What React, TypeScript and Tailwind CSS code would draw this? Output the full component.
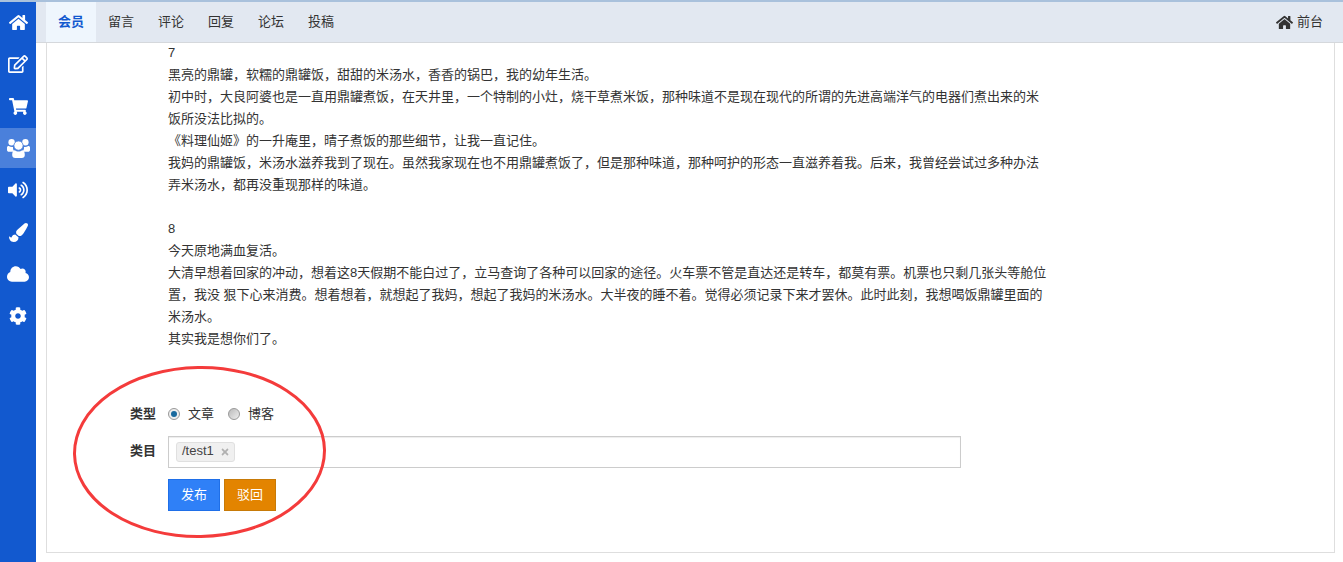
import React from 'react';
import { FaHome, FaRegEdit, FaShoppingCart, FaVolumeUp, FaPaintBrush, FaCloud, FaCog, FaTimes } from 'react-icons/fa';

// FontAwesome 4 style group icon, the package only has the newer shape
const UsersIcon = () => (
  <svg width="23" height="21" viewBox="0 0 23 21" fill="currentColor">
    <circle cx="4.6" cy="4.2" r="3.2" />
    <circle cx="18.4" cy="4.2" r="3.2" />
    <path d="M0 9.6C0 8.6.8 8 1.8 8.1c.9.7 2 1 3.2 1 .3 0 .7 0 1-.1-.2 1.9.5 3.6 1.8 4.8H2c-1.2 0-2-.7-2-1.8V9.6z" />
    <path d="M23 9.6c0-1-.8-1.6-1.8-1.5-.9.7-2 1-3.2 1-.3 0-.7 0-1-.1.2 1.9-.5 3.6-1.8 4.8H21c1.2 0 2-.7 2-1.8V9.6z" />
    <circle cx="11.5" cy="7.6" r="4.6" stroke="#4a80db" strokeWidth="0.8" />
    <path d="M5.2 17c0-2.6.6-4.8 2.6-4.8 1 .9 2.3 1.4 3.7 1.4s2.7-.5 3.7-1.4c2 0 2.6 2.2 2.6 4.8 0 1.9-1.2 3-3 3H8.200c-1.800 0-3-1.100-3-3z" />
  </svg>
);

const sideItems = [
  { icon: <FaHome size={19} /> },
  { icon: <FaRegEdit size={20} /> },
  { icon: <FaShoppingCart size={19} /> },
  { icon: <UsersIcon />, active: true },
  { icon: <FaVolumeUp size={20} /> },
  { icon: <FaPaintBrush size={19} /> },
  { icon: <FaCloud size={22} /> },
  { icon: <FaCog size={18} /> },
];

const tabs = ['会员', '留言', '评论', '回复', '论坛', '投稿'];

const App = () => {
  return (
    <div className="relative h-[562px] overflow-hidden bg-white text-[13px] text-[#333] font-['Liberation_Sans','Noto_Sans_CJK_SC',sans-serif]">
      <div className="h-[2px] bg-[#a9c1dc]" />
      <div className="flex h-[560px]">
        {/* Sidebar */}
        <div className="w-9 shrink-0 bg-[#1259cf]">
          {sideItems.map((item, i) => (
            <div key={i} className={`flex h-10 mb-[2px] items-center justify-center text-white ${item.active ? 'bg-[#4a80db]' : ''}`}>
              {item.icon}
            </div>
          ))}
        </div>

        <div className="flex min-w-0 flex-1 flex-col">
          {/* Top tabs */}
          <div className="flex h-[41px] shrink-0 items-stretch justify-between border-b border-[#d5d8dc] bg-[#e2e8f1] pl-[10px] pr-[10px]">
            <div className="flex">
              {tabs.map((t, i) => (
                <div key={t} className={`flex h-10 w-[50px] items-center justify-center ${i === 0 ? 'bg-[#eff6fd] font-bold text-[#1259cf]' : ''}`}>
                  {t}
                </div>
              ))}
            </div>
            <div className="flex items-center gap-[4px] pr-[10px]">
              <FaHome size={17} />
              <span>前台</span>
            </div>
          </div>

          {/* Panel */}
          <div className="ml-[10px] mr-[8px] mb-[9px] flex-1 border-x border-b border-[#dedede] pl-[121px]">
            <div className="-mt-px w-[880px] leading-[22px]">
              <p>7</p>
              <p>黑亮的鼎罐，软糯的鼎罐饭，甜甜的米汤水，香香的锅巴，我的幼年生活。</p>
              <p>初中时，大良阿婆也是一直用鼎罐煮饭，在天井里，一个特制的小灶，烧干草煮米饭，那种味道不是现在现代的所谓的先进高端洋气的电器们煮出来的米饭所没法比拟的。</p>
              <p>《料理仙姬》的一升庵里，晴子煮饭的那些细节，让我一直记住。</p>
              <p>我妈的鼎罐饭，米汤水滋养我到了现在。虽然我家现在也不用鼎罐煮饭了，但是那种味道，那种呵护的形态一直滋养着我。后来，我曾经尝试过多种办法弄米汤水，都再没重现那样的味道。</p>
              <p className="mt-[22px]">8</p>
              <p>今天原地满血复活。</p>
              <p>大清早想着回家的冲动，想着这8天假期不能白过了，立马查询了各种可以回家的途径。火车票不管是直达还是转车，都莫有票。机票也只剩几张头等舱位置，我没 狠下心来消费。想着想着，就想起了我妈，想起了我妈的米汤水。大半夜的睡不着。觉得必须记录下来才罢休。此时此刻，我想喝饭鼎罐里面的米汤水。</p>
              <p>其实我是想你们了。</p>
            </div>

            {/* Form */}
            <div className="mt-[53px] -ml-[38px]">
              <div className="flex h-[22px] items-center">
                <span className="w-[26px] font-bold">类型</span>
                <div className="ml-3 flex items-center">
                  <span className="flex h-3 w-3 items-center justify-center rounded-full border border-[#999] bg-[#eee]">
                    <span className="h-[6px] w-[6px] rounded-full bg-[#1a6a9e]" />
                  </span>
                  <span className="ml-2">文章</span>
                  <span className="ml-[14px] h-3 w-3 rounded-full border border-[#999] bg-gradient-to-br from-[#bbb] to-[#eee]" />
                  <span className="ml-2">博客</span>
                </div>
              </div>
              <div className="mt-[11px] flex items-center">
                <span className="w-[26px] pb-[2px] font-bold">类目</span>
                <div className="ml-3 flex h-8 w-[793px] items-center border border-[#ccc] pl-[7px] shadow-[inset_0_1px_1px_rgba(0,0,0,0.075)]">
                  <span className="flex h-[20px] w-[59px] items-center gap-[6px] rounded-[3px] border border-[#e0e0e0] bg-[#f0f0f0] pb-[2px] pl-[5px] text-[#444]">
                    /test1
                    <FaTimes size={10} className="mt-[2px] text-[#b0b0b0]" />
                  </span>
                </div>
              </div>
              <div className="ml-[38px] mt-[11px] flex gap-1">
                <button className="h-8 w-[52px] border border-[#1f6fe8] bg-[#2f80f7] text-white">发布</button>
                <button className="h-8 w-[52px] border border-[#c77a08] bg-[#e38400] text-white">驳回</button>
              </div>
            </div>
          </div>
        </div>
      </div>

      {/* Hand-drawn annotation */}
      <svg className="absolute left-[70px] top-[362px]" width="260" height="180" fill="none">
        <ellipse cx="129.5" cy="90" rx="125" ry="84.500" stroke="#f43b3b" strokeWidth="3" transform="rotate(-1 129.5 90)" />
      </svg>
    </div>
  );
};

export default App;
